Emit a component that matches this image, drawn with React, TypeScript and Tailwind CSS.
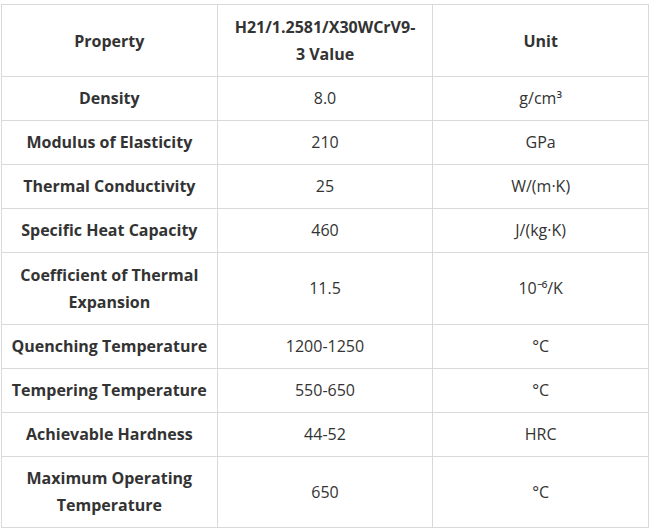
const rows: [string, string, string][] = [
  ['Density', '8.0', 'g/cm³'],
  ['Modulus of Elasticity', '210', 'GPa'],
  ['Thermal Conductivity', '25', 'W/(m·K)'],
  ['Specific Heat Capacity', '460', 'J/(kg·K)'],
  ['Coefficient of Thermal Expansion', '11.5', '10⁻⁶/K'],
  ['Quenching Temperature', '1200-1250', '°C'],
  ['Tempering Temperature', '550-650', '°C'],
  ['Achievable Hardness', '44-52', 'HRC'],
  ['Maximum Operating Temperature', '650', '°C'],
];

const cell = 'border border-[#d9d9d9] px-1 text-center';

export default function App() {
  return (
    <div className="bg-white pt-1 pl-px w-[652px] h-[530px] font-['Open_Sans',sans-serif] text-[#333] text-[16px] leading-[27px]">
      <table className="w-[648px] table-fixed border-collapse">
        <thead>
          <tr>
            <th className={`${cell} pt-[9px] pb-2 font-bold`}>Property</th>
            <th className={`${cell} pt-[9px] pb-2 font-bold`}>
              H21/1.2581/X30WCrV9-
              <br />3 Value
            </th>
            <th className={`${cell} pt-[9px] pb-2 font-bold`}>Unit</th>
          </tr>
        </thead>
        <tbody>
          {rows.map(([p, v, u], i) => (
            <tr key={p} className={i === 4 ? 'h-[72px]' : ''}>
              <td className={`${cell} py-2 font-bold`}>{p}</td>
              <td className={`${cell} py-2`}>{v}</td>
              <td className={`${cell} py-2`}>{u}</td>
            </tr>
          ))}
        </tbody>
      </table>
    </div>
  );
}
